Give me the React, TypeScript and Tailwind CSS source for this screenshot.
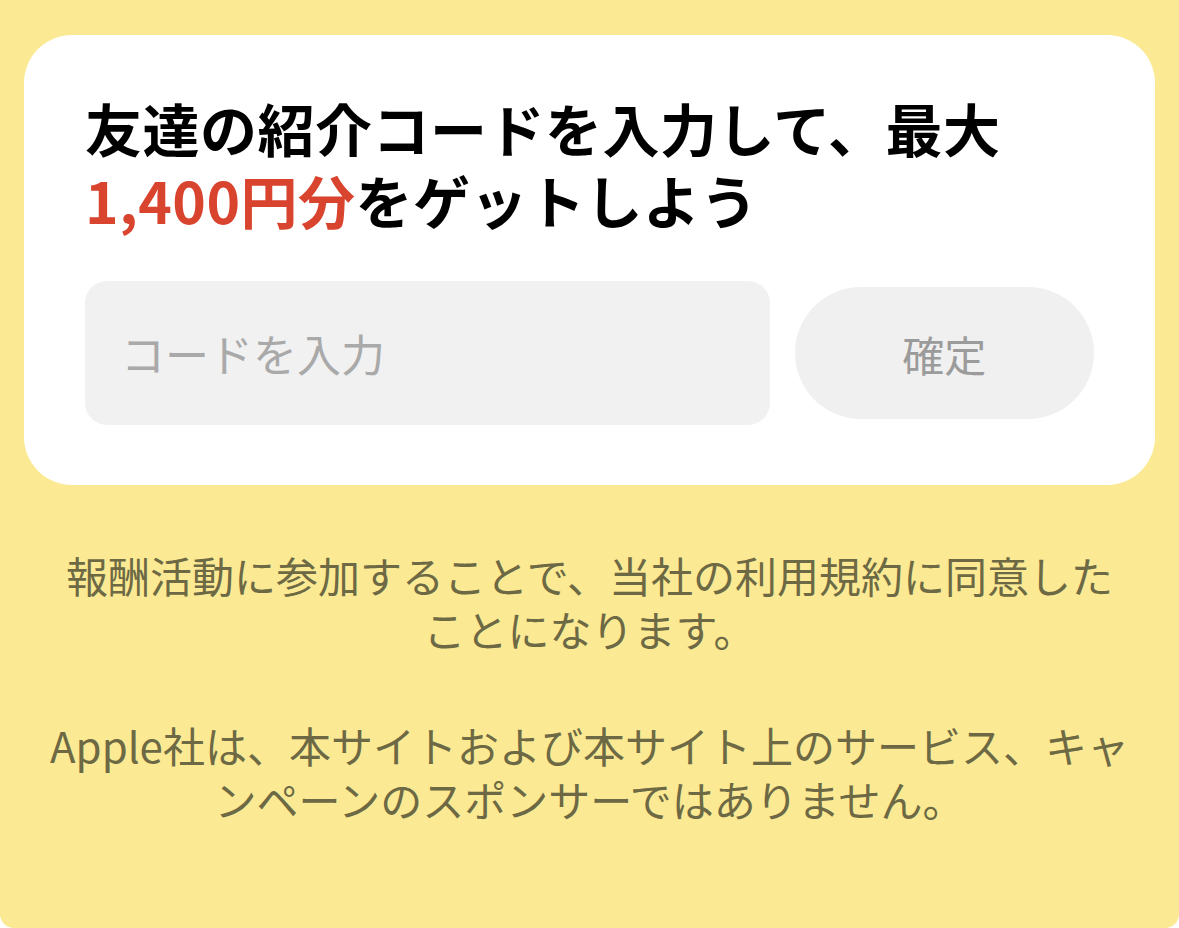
export default function App() {
  return (
    <div className="bg-white min-h-screen">
      <div
        className="h-[928px] bg-[#fbea93] rounded-b-[14px] px-[24px] pt-[35px]"
        style={{ fontFamily: '"Noto Sans CJK JP", "Noto Sans", sans-serif' }}
      >
        {/* Referral card */}
        <div className="bg-white rounded-[48px] px-[61px] pt-[56px] pb-[60px]">
          <h1 className="text-[57px] leading-[72px] tracking-[0.5px] font-bold text-black">
            友達の紹介コードを入力して、最大
            <br />
            <span className="text-[#d9442f]">1,400円分</span>をゲットしよう
          </h1>
          <div className="mt-[46px] flex items-center gap-[25px]">
            <input
              type="text"
              placeholder="コードを入力"
              className="w-[686px] h-[144px] rounded-[22px] bg-[#f1f1f1] px-[36px] text-[44px] text-black placeholder-[#a9a9a9] outline-none"
            />
            <button className="w-[300px] h-[132px] rounded-full bg-[#f0f0f0] text-[42px] text-[#9b9b9b]">
              確定
            </button>
          </div>
        </div>

        {/* Notes */}
        <div className="mt-[63px] text-center text-[42px] leading-[54px] text-[#6d6944]">
          <p>
            報酬活動に参加することで、当社の利用規約に同意した
            <br />
            ことになります。
          </p>
          <p className="mt-[62px]">
            Apple社は、本サイトおよび本サイト上のサービス、キャ
            <br />
            ンペーンのスポンサーではありません。
          </p>
        </div>
      </div>
    </div>
  );
}
